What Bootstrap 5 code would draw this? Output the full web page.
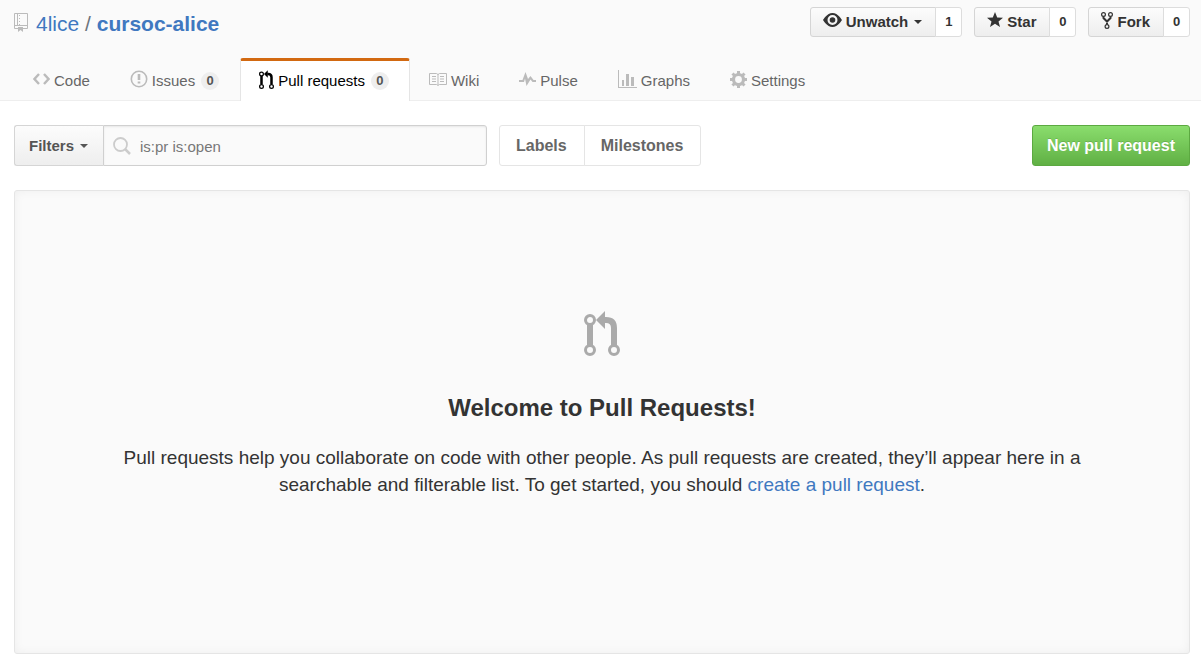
<!DOCTYPE html>
<html lang="en">
<head>
<meta charset="utf-8">
<meta name="viewport" content="width=device-width, initial-scale=1">
<title>Pull requests · 4lice/cursoc-alice</title>
<link href="https://cdn.jsdelivr.net/npm/bootstrap@5.3.0/dist/css/bootstrap.min.css" rel="stylesheet">
<style>
body { font-family: "Liberation Sans", Arial, sans-serif; font-size: 15px; line-height: 20px; color: #333; background: #fff; }
a { color: #4078c0; text-decoration: none; }
svg { display: block; flex: none; }
.page-pad { padding-left: 14px; padding-right: 11px; }
.repo-head { background: #fafafa; border-bottom: 1px solid #eee; padding-top: 7px; }
.repo-title { font-size: 21px; line-height: 30px; padding-top: 2px; }
.repo-title svg { margin-right: 8px; margin-bottom: 4px; color: #bbb; }
.social { gap: 12px; }
.btn { --bs-btn-font-size: 15px; --bs-btn-font-weight: 700; --bs-btn-line-height: 20px; --bs-btn-border-radius: 3px; --bs-btn-color: #333; }
.btn-soft { background: linear-gradient(#fcfcfc, #eee); border-color: #d5d5d5; }
.btn-sm-soft { padding: 4px 13px 4px 12px; gap: 4px; }
.btn-sm-soft svg { margin-bottom: 2px; }
.btn-count { background: #fff; border-color: #ddd; padding: 4px 7px; min-width: 27px; font-size: 13px; }
.caret { border: 4px solid transparent; border-top-color: currentColor; border-bottom: 0; margin-left: 2px; }
.repo-tabs { margin-top: 19px; margin-bottom: -1px; }
.repo-tabs .nav-link { display: flex; align-items: center; gap: 4px; height: 43px; padding: 0 20px 0 18px; border: 1px solid transparent; border-top: 3px solid transparent; border-bottom: 0; border-radius: 3px 3px 0 0; color: #666; }
.repo-tabs .nav-link svg { color: #bbb; margin-bottom: 4px; }
.repo-tabs .nav-link.active { background: #fff; border-color: #e5e5e5; border-top-color: #d26911; color: #000; }
.repo-tabs .nav-link.active svg { color: #000; }
.tally { background: #eee; color: #555; font-size: 13px; font-weight: 700; line-height: 18px; width: 18px; border-radius: 9px; text-align: center; margin-left: 2px; }
.tools { padding-top: 24px; gap: 12px; }
.tools .btn { font-size: 16px; padding: 9px 17px 9px 16px; line-height: 21px; }
.tools .btn-filter { color: #555; font-size: 15px; padding: 9px 15px 9px 14px; gap: 4px; border-radius: 3px 0 0 3px; border-right: 0; }
.search-group { width: 473px; }
.search-box { border: 1px solid #d0d0d0; border-radius: 0 3px 3px 0; background: #fafafa; box-shadow: inset 0 1px 2px rgba(0,0,0,.08); color: #ccc; padding-left: 9px; }
.search-box input { background: none; border: 0; box-shadow: none; outline: 0; color: #777; font-size: 15px; padding: 2px 9px 0; }
.tools .btn-plain { background: #fff; border-color: #e5e5e5; color: #666; }
.tools .btn-new { color: #fff; background: linear-gradient(#8add6d, #60b044); border-color: #5ca941; text-shadow: 0 -1px 0 rgba(0,0,0,.15); padding: 9px 14px; }
.blank { margin-top: 24px; margin-bottom: 12px; padding: 120px 90px 155px; background: #fafafa; border: 1px solid #e5e5e5; border-radius: 3px; box-shadow: inset 0 0 10px rgba(0,0,0,.05); text-align: center; }
.blank h1 { font-size: 24px; font-weight: 700; line-height: 30px; margin: 37px 0 21px; }
.blank p { font-size: 19px; line-height: 27px; margin: 0 auto; max-width: 980px; }
</style>
</head>
<body>
<svg width="0" height="0" class="position-absolute" aria-hidden="true">
  <symbol id="pull" viewBox="0 0 36 45"><g fill="none" stroke="currentColor"><g stroke-width="3"><circle cx="6" cy="9" r="4.5"/><circle cx="6" cy="39" r="4.5"/><circle cx="30" cy="39" r="4.5"/></g><path stroke-width="6" d="M6 14v20M20 9h2q8 0 8 8v17"/></g><path fill="currentColor" d="M12 9l9-9v18z"/></symbol>
</svg>
<header class="repo-head">
  <div class="page-pad d-flex justify-content-between align-items-start">
    <div class="repo-title d-flex align-items-center">
      <svg width="14" height="19" viewBox="0 0 14 19" fill="none" stroke="currentColor"><path d="M.5.5h13v15H9M.5.5v15H4M.5 12.5h13M3.5 1v11"/><path stroke-dasharray="1 2" d="M5.5 2v10"/><path fill="currentColor" stroke="none" d="M4 14h5v5l-2.500-2L4 19z"/></svg>
      <span><a href="#">4lice</a> <span class="text-secondary">/</span> <a href="#" class="fw-bold">cursoc-alice</a></span>
    </div>
    <div class="social d-flex">
      <div class="btn-group">
        <button type="button" class="btn btn-soft btn-sm-soft d-flex align-items-center"><svg width="19" height="16" viewBox="0 0 19 16"><path fill="currentColor" fill-rule="evenodd" d="M9.500 0C4 0 0 7 0 7s4 7 9.500 7S19 7 19 7s-4-7-9.500-7zm0 12a5 5 0 1 1 0-10 5 5 0 0 1 0 10z"/><circle cx="9.500" cy="7" r="2.800" fill="currentColor"/></svg>Unwatch<span class="caret"></span></button>
        <button type="button" class="btn btn-count">1</button>
      </div>
      <div class="btn-group">
        <button type="button" class="btn btn-soft btn-sm-soft d-flex align-items-center"><svg width="16" height="18" viewBox="0 0 16 18"><path fill="currentColor" d="M8 0l2.200 5.400 5.800.3-4.500 3.700L13 15l-5-3.200L3 15l1.500-5.600L0 5.700l5.800-.3z"/></svg>Star</button>
        <button type="button" class="btn btn-count">0</button>
      </div>
      <div class="btn-group">
        <button type="button" class="btn btn-soft btn-sm-soft d-flex align-items-center"><svg width="12" height="18" viewBox="0 0 12 18" fill="none" stroke="currentColor"><g stroke-width="1.200"><circle cx="2.500" cy="2.500" r="1.900"/><circle cx="9.500" cy="2.500" r="1.900"/><circle cx="6" cy="14.500" r="1.900"/></g><path stroke-width="2" d="M2.500 4.500V6L6 9.500 9.500 6V4.500M6 9v3.500"/></svg>Fork</button>
        <button type="button" class="btn btn-count">0</button>
      </div>
    </div>
  </div>
  <nav class="repo-tabs nav page-pad">
    <a class="nav-link" href="#"><svg width="17" height="12" viewBox="0 0 17 12" fill="none" stroke="currentColor" stroke-width="2.400"><path d="M6 1L1.500 6 6 11M11 1l4.500 5-4.500 5"/></svg>Code</a>
    <a class="nav-link" href="#"><svg width="18" height="18" viewBox="0 0 18 18"><circle cx="9" cy="9" r="7.700" fill="none" stroke="currentColor" stroke-width="1.600"/><path fill="currentColor" d="M7.700 4h2.600v6H7.700zM7.700 11.500h2.600v2H7.700z"/></svg>Issues <span class="tally">0</span></a>
    <a class="nav-link active" href="#" aria-current="page"><svg width="15" height="19"><use href="#pull"/></svg>Pull requests <span class="tally">0</span></a>
    <a class="nav-link" href="#"><svg width="18" height="15" viewBox="0 0 18 15" fill="none" stroke="currentColor"><path d="M.5 1.500h7l1.500 1 1.500-1h7v11h-7l-1.500 1-1.500-1h-7zM9 2v11M3 4.500h4M3 7h4M3 9.500h4M11 4.500h4M11 7h4M11 9.500h4"/></svg>Wiki</a>
    <a class="nav-link" href="#"><svg width="17" height="14" viewBox="0 0 17 14" fill="currentColor"><path d="M0 8h3.500L6.500 0 9 7l2.500-3 3 4H17v2h-3.500l-2-2.500L7.500 14 6 6.500 5 10H0z"/></svg>Pulse</a>
    <a class="nav-link" href="#"><svg width="19" height="18" viewBox="0 0 19 18" fill="currentColor"><path d="M0 0h1v17h18v1H0zM4 10h2v6H4zM8 4h3v12H8zM13 7h3v9h-3z"/></svg>Graphs</a>
    <a class="nav-link" href="#"><svg width="17" height="17" viewBox="-8.500 -8.500 17 17" fill="none" stroke="currentColor"><circle r="5" stroke-width="3.200"/><path stroke-width="3" d="M0-8.500v3M0 8.500v-3M-8.500 0h3M8.500 0h-3M-6-6l2 2M6-6l-2 2M-6 6l2-2M6 6L4 4"/></svg>Settings</a>
  </nav>
</header>
<main class="page-pad">
  <div class="tools d-flex flex-wrap">
    <form class="search-group d-flex">
      <button type="button" class="btn btn-soft btn-filter d-flex align-items-center">Filters<span class="caret"></span></button>
      <div class="search-box d-flex align-items-center flex-grow-1">
        <svg width="18" height="18" viewBox="0 0 18 18" fill="none" stroke="currentColor"><circle cx="7.500" cy="7.500" r="6.500" stroke-width="1.800"/><path stroke-width="2.500" d="M12 12l5 5"/></svg>
        <input type="text" class="flex-grow-1" value="is:pr is:open" aria-label="Search all pull requests">
      </div>
    </form>
    <div class="btn-group">
      <a href="#" class="btn btn-plain">Labels</a>
      <a href="#" class="btn btn-plain">Milestones</a>
    </div>
    <button type="button" class="btn btn-new ms-auto">New pull request</button>
  </div>
  <section class="blank">
    <svg class="mx-auto" width="36" height="45" color="#aaa"><use href="#pull"/></svg>
    <h1>Welcome to Pull Requests!</h1>
    <p>Pull requests help you collaborate on code with other people. As pull requests are created, they’ll appear here in a searchable and filterable list. To get started, you should <a href="#">create a pull request</a>.</p>
  </section>
</main>
<script src="https://cdn.jsdelivr.net/npm/bootstrap@5.3.0/dist/js/bootstrap.bundle.min.js"></script>
</body>
</html>
